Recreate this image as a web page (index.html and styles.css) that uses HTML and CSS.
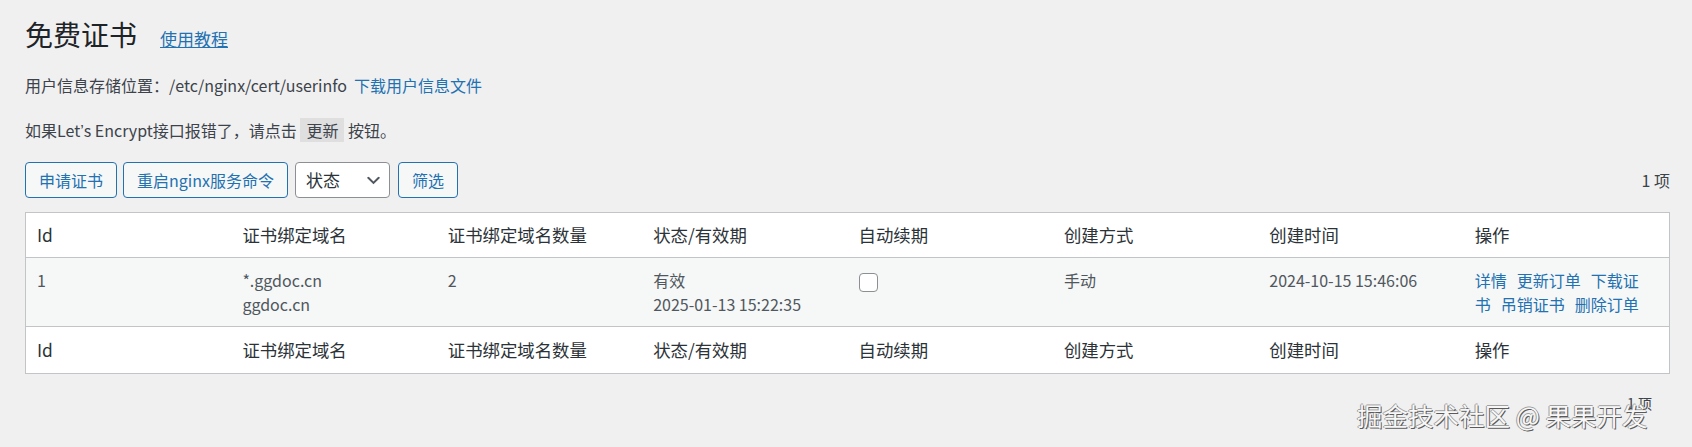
FILE: index.html
```html
<!DOCTYPE html>
<html lang="zh-CN">
<head>
<meta charset="utf-8">
<title>免费证书</title>
<link rel="stylesheet" href="styles.css">
</head>
<body>
<div class="wrap">
  <div class="title-row">
    <h1 class="title">免费证书</h1>
    <a class="title-link" href="#">使用教程</a>
  </div>
  <p class="info">用户信息存储位置：/etc/nginx/cert/userinfo<a class="link info-link" href="#">下载用户信息文件</a></p>
  <p class="note">如果Let<span class="apos">’</span>s Encrypt接口报错了，请点击 <code class="code">更新</code> 按钮。</p>
  <div class="tablenav">
    <div class="actions">
      <button class="btn">申请证书</button>
      <button class="btn">重启nginx服务命令</button>
      <div class="select">
        <span>状态</span>
        <svg class="chev" viewBox="0 0 20 20" width="19" height="19"><path d="M5 6l5 5 5-5 2 1-7 7-7-7 2-1z" fill="#50575e"/></svg>
      </div>
      <button class="btn btn-filter">筛选</button>
    </div>
    <div class="count">1 项</div>
  </div>
  <table class="list">
    <thead>
      <tr><th>Id</th><th>证书绑定域名</th><th>证书绑定域名数量</th><th>状态/有效期</th><th>自动续期</th><th>创建方式</th><th>创建时间</th><th>操作</th></tr>
    </thead>
    <tbody>
      <tr>
        <td>1</td>
        <td>*.ggdoc.cn<br>ggdoc.cn</td>
        <td>2</td>
        <td>有效<br>2025-01-13 15:22:35</td>
        <td><span class="check"></span></td>
        <td>手动</td>
        <td>2024-10-15 15:46:06</td>
        <td class="ops"><a class="link op" href="#">详情</a><a class="link op" href="#">更新订单</a><a class="link op" href="#">下载证书</a><a class="link op" href="#">吊销证书</a><a class="link op" href="#">删除订单</a></td>
      </tr>
    </tbody>
    <tfoot>
      <tr><th>Id</th><th>证书绑定域名</th><th>证书绑定域名数量</th><th>状态/有效期</th><th>自动续期</th><th>创建方式</th><th>创建时间</th><th>操作</th></tr>
    </tfoot>
  </table>
  <div class="tablenav tablenav-bottom">
    <div class="count count-bottom">1 项</div>
  </div>
</div>
<div class="watermark">掘金技术社区 @ 果果开发</div>
</body>
</html>
```

FILE: styles.css
```css
html, body {
  margin: 0;
  padding: 0;
}
body {
  background: #f0f0f1;
  color: #3c434a;
  font-family: "Noto Sans CJK SC", "Noto Sans", sans-serif;
  font-size: 16px;
  line-height: 24px;
  position: relative;
  min-height: 447px;
}
.wrap {
  padding: 14px 22px 0 25px;
}
.title-row {
  display: flex;
  align-items: baseline;
  height: 40px;
}
.title {
  margin: 0;
  font-size: 28px;
  line-height: 40px;
  font-weight: 400;
  color: #1d2327;
}
.title-link {
  margin-left: 23px;
  font-size: 17px;
  color: #2271b1;
  text-decoration: underline;
}
.link {
  color: #2271b1;
  text-decoration: none;
}
.info {
  margin: 19px 0 0;
}
.info-link {
  margin-left: 7px;
}
.note {
  margin: 21px 0 0;
  height: 24px;
}
.apos {
  font-family: "Liberation Sans", sans-serif;
  line-height: 1;
}
.code {
  font-family: "Noto Sans CJK SC", sans-serif;
  font-size: 16px;
  background: rgba(0, 0, 0, 0.07);
  padding: 3px 6px;
  line-height: 18px;
  display: inline-block;
}
.tablenav {
  display: flex;
  justify-content: space-between;
  align-items: center;
  height: 36px;
  margin-top: 20px;
}
.actions {
  display: flex;
  align-items: center;
}
.btn {
  height: 36px;
  padding: 0 13px;
  border: 1px solid #2271b1;
  border-radius: 4px;
  background: #f6f7f7;
  color: #2271b1;
  font-family: inherit;
  font-size: 16px;
  line-height: 34px;
  margin-right: 6px;
}
.btn + .btn {
  margin-right: 7px;
}
.select {
  display: flex;
  align-items: center;
  justify-content: space-between;
  box-sizing: border-box;
  width: 95px;
  height: 36px;
  padding: 0 6px 0 10px;
  border: 1px solid #8c8f94;
  border-radius: 4px;
  background: #fff;
  color: #2c3338;
  font-size: 17px;
  margin-right: 8px;
}
.chev {
  display: block;
}
.btn-filter {
  margin-right: 0;
}
.count {
  font-size: 16px;
  color: #3c434a;
}
.list {
  width: 100%;
  margin-top: 14px;
  border-collapse: separate;
  border-spacing: 0;
  table-layout: fixed;
  background: #fff;
  border: 1px solid #c3c4c7;
}
.list th {
  text-align: left;
  font-weight: 400;
  font-size: 17.4px;
  line-height: 24px;
  color: #2c3338;
  padding: 10px 11px;
}
.list thead th {
  border-bottom: 1px solid #c3c4c7;
}
.list tfoot th {
  border-top: 1px solid #c3c4c7;
  padding-top: 11px;
  padding-bottom: 11px;
}
.list td {
  vertical-align: top;
  font-size: 16px;
  line-height: 24px;
  color: #50575e;
  padding: 10px 11px;
  background: #f6f7f7;
}
.list td.ops {
  padding-right: 20px;
}
.op {
  margin-right: 10px;
}
.check {
  display: block;
  width: 19px;
  height: 19px;
  box-sizing: border-box;
  border: 1px solid #8c8f94;
  border-radius: 4px;
  background: #fff;
  margin-top: 5px;
}
.tablenav-bottom {
  justify-content: flex-end;
  margin-top: 11px;
}
.count-bottom {
  font-size: 14px;
  margin-right: 18px;
}
.watermark {
  position: absolute;
  left: 1357px;
  top: 400px;
  font-size: 25.5px;
  line-height: 30px;
  color: #f7f7f7;
  white-space: nowrap;
  text-shadow: 1px 1px 0 #5a5a5a, -1px 0 0 #9a9a9a, 0 -1px 0 #a0a0a0;
}
```
